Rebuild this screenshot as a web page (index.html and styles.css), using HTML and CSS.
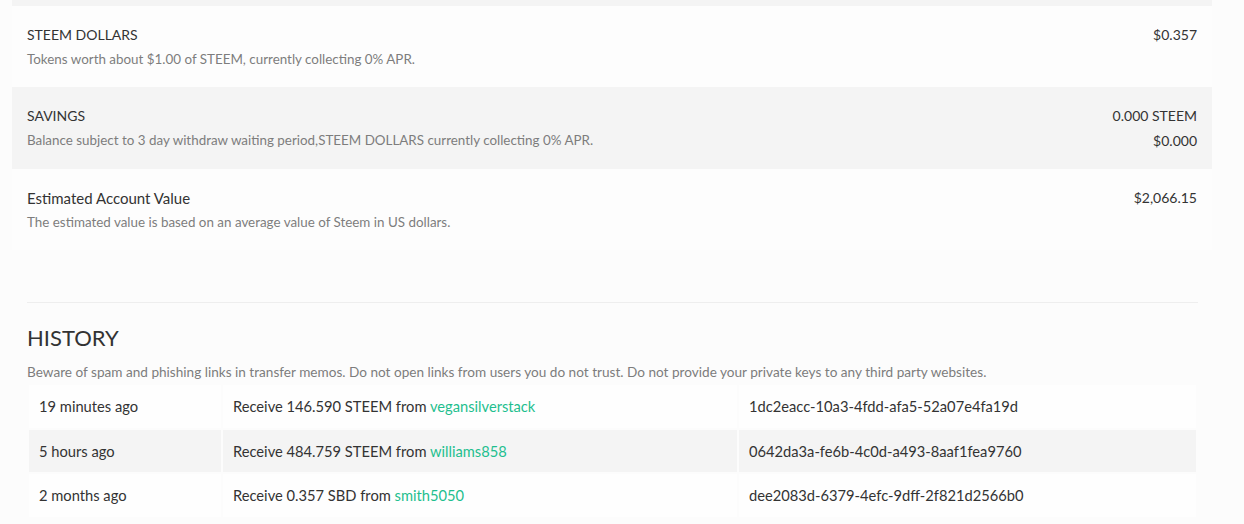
FILE: index.html
```html
<!DOCTYPE html>
<html>
<head>
<meta charset="utf-8">
<link rel="stylesheet" href="styles.css">
</head>
<body>
<div class="wallet">
  <div class="strip"></div>
  <div class="row">
    <div class="info">
      <div class="title">STEEM DOLLARS</div>
      <div class="desc">Tokens worth about $1.00 of STEEM, currently collecting 0% APR.</div>
    </div>
    <div class="values">
      <div class="val">$0.357</div>
    </div>
  </div>
  <div class="row alt">
    <div class="info">
      <div class="title">SAVINGS</div>
      <div class="desc">Balance subject to 3 day withdraw waiting period,STEEM DOLLARS currently collecting 0% APR.</div>
    </div>
    <div class="values">
      <div class="val">0.000 STEEM</div>
      <div class="val">$0.000</div>
    </div>
  </div>
  <div class="row">
    <div class="info">
      <div class="title mixed">Estimated Account Value</div>
      <div class="desc">The estimated value is based on an average value of Steem in US dollars.</div>
    </div>
    <div class="values">
      <div class="val">$2,066.15</div>
    </div>
  </div>
</div>
<div class="history">
  <hr class="divider">
  <h2 class="heading">HISTORY</h2>
  <p class="warning">Beware of spam and phishing links in transfer memos. Do not open links from users you do not trust. Do not provide your private keys to any third party websites.</p>
  <table class="tx">
    <tbody>
      <tr>
        <td class="c-time">19 minutes ago</td>
        <td class="c-memo">Receive 146.590 STEEM from <a href="#">vegansilverstack</a></td>
        <td class="c-id">1dc2eacc-10a3-4fdd-afa5-52a07e4fa19d</td>
      </tr>
      <tr class="shade">
        <td class="c-time">5 hours ago</td>
        <td class="c-memo">Receive 484.759 STEEM from <a href="#">williams858</a></td>
        <td class="c-id">0642da3a-fe6b-4c0d-a493-8aaf1fea9760</td>
      </tr>
      <tr>
        <td class="c-time">2 months ago</td>
        <td class="c-memo">Receive 0.357 SBD from <a href="#">smith5050</a></td>
        <td class="c-id">dee2083d-6379-4efc-9dff-2f821d2566b0</td>
      </tr>
    </tbody>
  </table>
</div>
</body>
</html>
```

FILE: styles.css
```css
html, body {
  margin: 0;
  padding: 0;
  background: #fcfcfc;
  font-family: "Lato", "Liberation Sans", sans-serif;
  color: #333;
}

.wallet {
  width: 1200px;
  margin-left: 12px;
}

.strip {
  height: 6px;
  background: #f4f4f4;
}

.row {
  display: flex;
  justify-content: space-between;
  padding: 20px 15px 19px;
  background: #fdfdfd;
}

.row.alt {
  background: #f4f4f4;
}

.title {
  font-size: 14px;
  line-height: 18px;
  color: #333;
}

.title.mixed {
  font-size: 15px;
}

.desc {
  font-size: 13.4px;
  line-height: 18px;
  margin-top: 6px;
  color: #7d7d7d;
}

.values {
  text-align: right;
}

.val {
  font-size: 14px;
  line-height: 18px;
  color: #333;
}

.val + .val {
  margin-top: 7px;
}

.history {
  width: 1171px;
  margin-left: 27px;
  padding-top: 52px;
}

.divider {
  margin: 0;
  border: 0;
  border-top: 1px solid #eeeeee;
}

.heading {
  margin: 22px 0 0;
  font-size: 22px;
  line-height: 26px;
  font-weight: normal;
  color: #333;
}

.warning {
  margin: 12px 0 0;
  font-size: 13.6px;
  line-height: 18px;
  color: #7d7d7d;
}

.tx {
  width: 100%;
  border-spacing: 2px;
  margin-top: 2px;
  font-size: 14.7px;
}

.tx td {
  height: 42.5px;
  padding: 0 10px;
  background: #fefefe;
  color: #333;
  vertical-align: middle;
  white-space: nowrap;
}

.tx tr.shade td {
  background: #f4f4f4;
}

.c-time { width: 172px; }
.c-memo { width: 494px; }

.tx a {
  color: #1fbf8f;
  text-decoration: none;
}
```
